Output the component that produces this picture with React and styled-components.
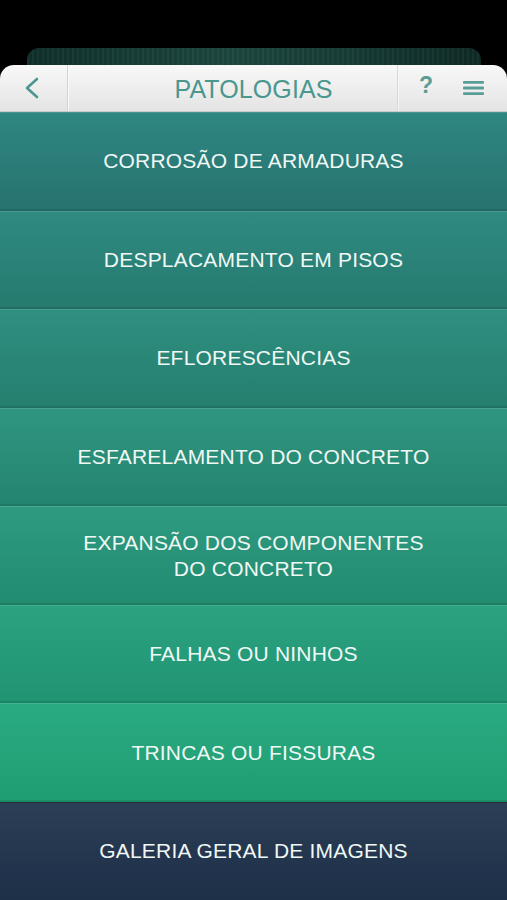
import React from 'react'
import styled, { createGlobalStyle } from 'styled-components'

const GlobalStyle = createGlobalStyle`
  html, body {
    margin: 0;
    padding: 0;
    background: #000;
  }
  body {
    font-family: "Liberation Sans", Arial, sans-serif;
  }
`

const items = [
  { label: 'CORROSÃO DE ARMADURAS', top: '#2f8682', bottom: '#27736f' },
  { label: 'DESPLACAMENTO EM PISOS', top: '#2f8a82', bottom: '#267a6e' },
  { label: 'EFLORESCÊNCIAS', top: '#2f8f81', bottom: '#257f6f' },
  { label: 'ESFARELAMENTO DO CONCRETO', top: '#2f9581', bottom: '#24856f' },
  { label: ['EXPANSÃO DOS COMPONENTES', 'DO CONCRETO'], top: '#2e9b81', bottom: '#228b70' },
  { label: 'FALHAS OU NINHOS', top: '#2ca281', bottom: '#209472' },
  { label: 'TRINCAS OU FISSURAS', top: '#2bab82', bottom: '#1f9c72' },
]

const Screen = styled.div`
  width: 507px;
  height: 900px;
  display: flex;
  flex-direction: column;
  background: #000;
  overflow: hidden;
`

const BackCard = styled.div`
  margin: 48px 26px 0 27px;
  height: 17px;
  border-radius: 12px 12px 0 0;
  background:
    repeating-linear-gradient(90deg, rgba(255,255,255,0.03) 0 2px, rgba(0,0,0,0.04) 2px 5px),
    linear-gradient(90deg, #10302b 0%, #1d4740 45%, #173c36 70%, #0f2a26 100%);
`

const Header = styled.header`
  height: 46px;
  display: flex;
  align-items: stretch;
  border-radius: 14px 14px 0 0;
  background: linear-gradient(#f8f8f8, #e4e4e4);
  border-bottom: 1px solid #c9cccb;
`

const BackButton = styled.div`
  width: 68px;
  display: flex;
  align-items: center;
  justify-content: center;
  padding-right: 4px;
  box-sizing: border-box;
  border-right: 1px solid #d3d3d3;
  box-shadow: 1px 0 0 #fafafa;
`

const Title = styled.h1`
  flex: 1;
  margin: 0;
  display: flex;
  align-items: center;
  justify-content: center;
  padding: 3px 0 0 42px;
  font-size: 25px;
  font-weight: 400;
  color: #4a978f;
  letter-spacing: 0.1px;
`

const RightGroup = styled.div`
  width: 109px;
  display: flex;
  align-items: center;
  border-left: 1px solid #d8d8d8;
  box-shadow: inset 1px 0 0 #f6f6f6;
`

const Help = styled.span`
  width: 56px;
  text-align: center;
  font-size: 23px;
  font-weight: 700;
  color: #5a9d96;
  margin-top: -5px;
`

const MenuButton = styled.span`
  display: flex;
  margin-left: 9px;
`

const List = styled.nav`
  flex: 1;
  display: flex;
  flex-direction: column;
`

const Row = styled.div`
  flex: 1;
  display: flex;
  align-items: center;
  justify-content: center;
  text-align: center;
  font-size: 21px;
  letter-spacing: 0.2px;
  line-height: 26px;
  color: #f0f8f5;
  background: linear-gradient(${p => p.$top}, ${p => p.$bottom});
  box-shadow: inset 0 1px 0 rgba(255,255,255,0.12), inset 0 -2px 0 rgba(0,0,0,0.1);
`

const GalleryRow = styled(Row)`
  flex: 0 0 98px;
  background: linear-gradient(#2b3f56, #1e2f48);
  box-shadow: inset 0 1px 0 rgba(0,0,0,0.3);
`

const BackIcon = () => (
  <svg width="16" height="22" viewBox="0 0 16 22" fill="none">
    <path d="M13 2 L3 11 L13 20" stroke="#4a978f" strokeWidth="2.6" strokeLinecap="round" strokeLinejoin="round" />
  </svg>
)

const MenuIcon = () => (
  <svg width="21" height="16" viewBox="0 0 21 16">
    <rect x="0" y="1" width="21" height="2.8" rx="1" fill="#5a9d96" />
    <rect x="0" y="6.6" width="21" height="2.8" rx="1" fill="#5a9d96" />
    <rect x="0" y="12.2" width="21" height="2.8" rx="1" fill="#5a9d96" />
  </svg>
)

const App = () => {
  return (
    <Screen>
      <GlobalStyle />
      <BackCard />
      <Header>
        <BackButton>
          <BackIcon />
        </BackButton>
        <Title>PATOLOGIAS</Title>
        <RightGroup>
          <Help>?</Help>
          <MenuButton>
            <MenuIcon />
          </MenuButton>
        </RightGroup>
      </Header>
      <List>
        {items.map((item, i) => (
          <Row key={i} $top={item.top} $bottom={item.bottom}>
            <span>
              {Array.isArray(item.label)
                ? item.label.map((l, j) => <div key={j}>{l}</div>)
                : item.label}
            </span>
          </Row>
        ))}
        <GalleryRow>GALERIA GERAL DE IMAGENS</GalleryRow>
      </List>
    </Screen>
  )
}

export default App
